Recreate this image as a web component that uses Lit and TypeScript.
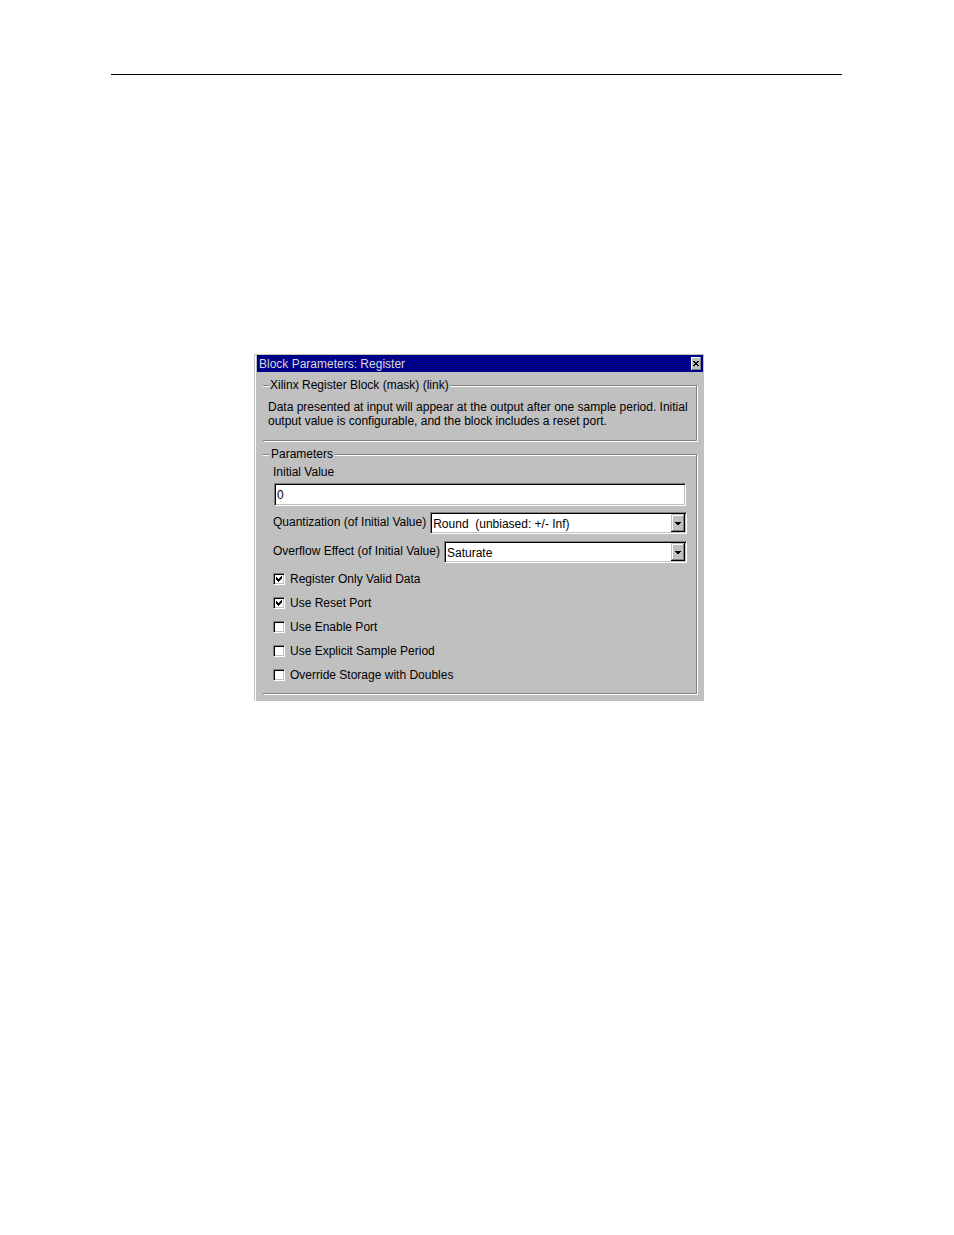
import { LitElement, html, css, svg } from "lit";
import { customElement, state } from "lit/decorators.js";

interface Option {
  id: string;
  label: string;
  checked: boolean;
}

const arrow = svg`
  <rect width="14" height="18" fill="#000"/>
  <rect width="13" height="17" fill="#c0c0c0"/>
  <path d="M1 16V1H12" fill="none" stroke="#fff" stroke-width="1" transform="translate(.5 .5)"/>
  <path d="M1 16.5H12.5V1" fill="none" stroke="#808080"/>
  <path d="M4 8h6v1H4zM5 9h4v1H5zM6 10h2v1H6z" fill="#000"/>`;

@customElement("app-root")
export class AppRoot extends LitElement {
  @state() private options: Option[] = [
    { id: "valid", label: "Register Only Valid Data", checked: true },
    { id: "reset", label: "Use Reset Port", checked: true },
    { id: "enable", label: "Use Enable Port", checked: false },
    { id: "period", label: "Use Explicit Sample Period", checked: false },
    { id: "doubles", label: "Override Storage with Doubles", checked: false },
  ];

  static styles = css`
    :host {
      display: block;
      min-height: 100vh;
      background: #fff;
      color: #000;
      font: 12px/14px "Liberation Sans", Arial, sans-serif;
    }
    * {
      box-sizing: border-box;
    }
    .page {
      padding: 74px 112px 0 111px;
    }
    .rule {
      margin: 0;
      border: 0;
      border-top: 1px solid #000;
    }
    .dialog {
      margin: 279px 138px 0 143px;
      border-left: 1px solid #c0c0c0;
      border-top: 1px solid #c0c0c0;
      box-shadow: inset 1px 0 0 #fff;
      background: #c0c0c0;
      padding: 0 0 7px 2px;
    }
    .titlebar {
      display: flex;
      align-items: center;
      justify-content: space-between;
      height: 17px;
      margin-right: 1px;
      padding: 0 2px;
      background: repeating-conic-gradient(#000078 0 25%, #000098 0 50%) 0 0 / 2px 2px;
      color: #d8d8d8;
    }
    .title {
      margin: 0;
      font: inherit;
    }
    .close {
      display: block;
      width: 10px;
      height: 13px;
      padding: 0;
      border: 1px solid;
      border-color: #fff #808080 #808080 #fff;
      background: #c0c0c0;
    }
    .close svg {
      display: block;
      width: 8px;
      height: 11px;
    }
    .group {
      min-width: 0;
      margin: 6px 7px 0 6px;
      padding: 0 9px 0 10px;
      border: 1px solid #808080;
      border-left: 0;
      box-shadow: 1px 1px 0 #fff, inset 0 1px 0 #fff;
    }
    .legend {
      margin-left: -4px;
      padding: 0 2px;
      background: #c0c0c0;
    }
    .about {
      padding: 0 5px;
    }
    .about .legend {
      margin-left: 1px;
      padding: 0 1px;
    }
    .text {
      margin: 8px 0 12px;
    }
    .label {
      display: block;
      white-space: nowrap;
    }
    .fields {
      padding-top: 4px;
    }
    .field {
      display: block;
      width: 100%;
      min-width: 0;
      margin: 0;
      border: 1px solid;
      border-color: #808080 #fff #fff #808080;
      border-radius: 0;
      outline: 0;
      background: #fff;
      box-shadow: inset 1px 1px 0 #000, inset -1px -1px 0 #c0c0c0;
      color: #000;
      font: inherit;
      appearance: none;
    }
    .entry {
      height: 23px;
      margin: 4px 0 6px 1px;
      width: calc(100% - 2px);
      padding: 0 2px;
    }
    .row {
      display: flex;
      gap: 4px;
      margin-bottom: 7px;
    }
    .row .label {
      padding-top: 3px;
    }
    .combo {
      display: grid;
      flex: 1;
      min-width: 0;
    }
    .combo > * {
      grid-area: 1 / 1;
    }
    .pick {
      height: 22px;
      padding: 1px 18px 0 2px;
    }
    .arrow {
      width: 14px;
      height: 18px;
      place-self: center end;
      margin-right: 2px;
      pointer-events: none;
    }
    .checks {
      display: grid;
      gap: 10px;
      padding: 2px 0 11px;
    }
    .check {
      display: flex;
      align-items: center;
      gap: 5px;
    }
    .mark {
      display: grid;
    }
    .mark > * {
      grid-area: 1 / 1;
    }
    .box {
      width: 12px;
      height: 12px;
    }
    .tick {
      width: 12px;
      height: 12px;
      pointer-events: none;
    }
  `;

  private toggle(id: string) {
    this.options = this.options.map((o) =>
      o.id === id ? { ...o, checked: !o.checked } : o,
    );
  }

  private combo(id: string, label: string, value: string) {
    return html`<div class="row">
      <label class="label" for=${id}>${label}</label>
      <div class="combo">
        <select class="field pick" id=${id}>
          <option>${value}</option>
        </select>
        <svg class="arrow" viewBox="0 0 14 18" shape-rendering="crispEdges" aria-hidden="true">
          ${arrow}
        </svg>
      </div>
    </div>`;
  }

  render() {
    return html`<main class="page">
      <hr class="rule" />
      <section class="dialog" aria-labelledby="title">
        <header class="titlebar">
          <h1 class="title" id="title">Block Parameters: Register</h1>
          <button class="close" aria-label="Close">
            <svg viewBox="0 0 8 11" shape-rendering="crispEdges" aria-hidden="true">
              <path d="M1 3h2v1h2V3h2v1H6v1H5v1h1v1h1v1H5V7H3v1H1V7h1V6h1V5H2V4H1z" />
            </svg>
          </button>
        </header>
        <fieldset class="group about">
          <legend class="legend">Xilinx Register Block (mask) (link)</legend>
          <p class="text">
            Data presented at input will appear at the output after one sample period. Initial
            output value is configurable, and the block includes a reset port.
          </p>
        </fieldset>
        <fieldset class="group">
          <legend class="legend">Parameters</legend>
          <div class="fields">
            <label class="label" for="initial">Initial Value</label>
            <input class="field entry" id="initial" type="text" value="0" />
            ${this.combo("quant", "Quantization (of Initial Value)", "Round\u00a0 (unbiased: +/- Inf)")}
            ${this.combo("overflow", "Overflow Effect (of Initial Value)", "Saturate")}
          </div>
          <div class="checks">
            ${this.options.map(
              (o) => html`<label class="check">
                <span class="mark">
                  <input
                    class="field box"
                    type="checkbox"
                    .checked=${o.checked}
                    @change=${() => this.toggle(o.id)}
                  />
                  ${o.checked
                    ? html`<svg class="tick" viewBox="0 0 12 12" shape-rendering="crispEdges" aria-hidden="true">
                        <path d="M3 4h1v1h1v1h1V5h1V4h1V3h1v3H8v1H7v1H6v1H5V8H4V7H3z" />
                      </svg>`
                    : null}
                </span>
                <span>${o.label}</span>
              </label>`,
            )}
          </div>
        </fieldset>
      </section>
    </main>`;
  }
}
